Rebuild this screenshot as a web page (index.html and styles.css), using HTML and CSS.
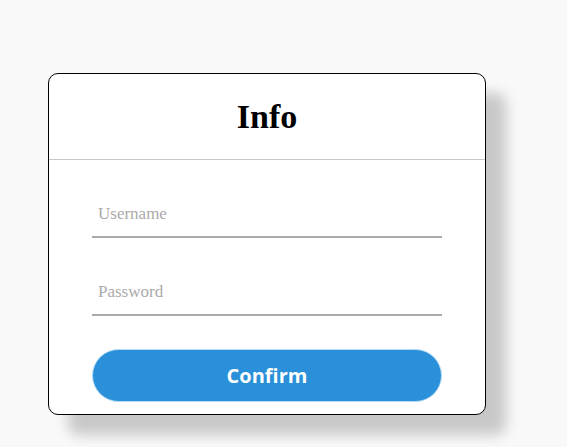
FILE: index.html
```html
<!DOCTYPE html>
<html>
<head>
<meta charset="utf-8">
<link rel="stylesheet" href="styles.css">
</head>
<body>
<div class="card">
  <div class="card-header"><h1 class="title">Info</h1></div>
  <form class="card-body">
    <input class="field" type="text" placeholder="Username">
    <input class="field" type="password" placeholder="Password">
    <button class="confirm" type="button">Confirm</button>
  </form>
</div>
</body>
</html>
```
FILE: styles.css
```css
html, body {
  margin: 0;
  padding: 0;
}
body {
  background: #f9f9f9;
  font-family: "Liberation Serif", serif;
  padding: 73px 0 0 48px;
  height: 447px;
  box-sizing: border-box;
}
.card {
  width: 438px;
  box-sizing: border-box;
  background: #fff;
  border: 1px solid #000;
  border-radius: 10px;
  box-shadow: 20px 20px 14px rgba(0, 0, 0, 0.2);
}
.card-header {
  height: 85px;
  border-bottom: 1px solid #c8c8c8;
  display: flex;
  align-items: center;
  justify-content: center;
}
.title {
  margin: 0;
  font-family: "Liberation Serif", serif;
  font-weight: bold;
  font-size: 34px;
  line-height: 1;
  color: #000;
}
.card-body {
  display: flex;
  flex-direction: column;
  padding: 32px 43px 12px;
  margin: 0;
}
.field {
  height: 46px;
  box-sizing: border-box;
  border: none;
  border-bottom: 2px solid #aaa;
  outline: none;
  padding: 0 6px;
  font-family: "Liberation Serif", serif;
  font-size: 17px;
  color: #333;
  background: transparent;
  margin: 0 0 32px;
}
.field::placeholder {
  color: #aaa;
}
.field + .field {
  margin-bottom: 33px;
}
.confirm {
  height: 53px;
  border: 1px solid #b8dcf5;
  border-radius: 27px;
  background: #2990d9;
  color: #fff;
  font-family: "Open Sans", sans-serif;
  font-weight: bold;
  font-size: 20px;
  cursor: pointer;
  padding: 0;
}
```
